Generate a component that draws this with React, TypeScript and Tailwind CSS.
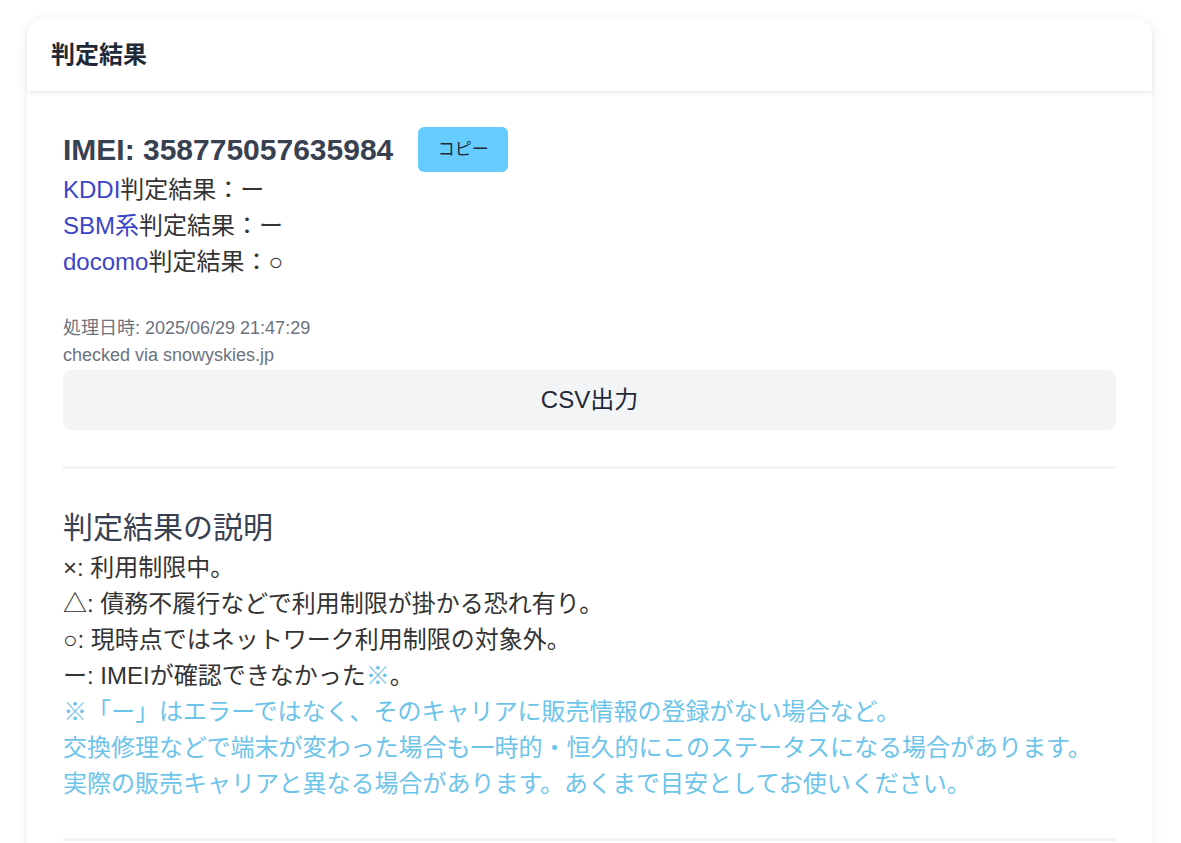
export default function App() {
  const font = { fontFamily: '"Liberation Sans", Arial, "Noto Sans CJK JP", sans-serif' };
  return (
    <div className="min-h-screen bg-white pt-[19px] pl-[27px] pr-[29px]" style={font}>
      <div className="rounded-2xl bg-white shadow-[0_2px_14px_rgba(0,0,0,0.07)]">
        <div className="h-[72px] flex items-center px-6 rounded-t-2xl shadow-[0_2px_4px_rgba(0,0,0,0.08)] relative">
          <h2 className="text-[24px] font-bold text-[#1f2937] leading-none">判定結果</h2>
        </div>
        <div className="px-9 pt-9 pb-0">
          <div className="flex items-center h-[45px]">
            <span className="text-[30px] font-bold text-[#374151]">IMEI: 358775057635984</span>
            <button className="ml-[25px] h-[45px] w-[90px] rounded-md bg-[#66ccff] text-[17px] text-[#1f2937]">コピー</button>
          </div>
          <div className="text-[24px] leading-[36px] text-[#333]">
            <div><span className="text-[#3b45c8]">KDDI</span>判定結果：ー</div>
            <div><span className="text-[#3b45c8]">SBM系</span>判定結果：ー</div>
            <div><span className="text-[#3b45c8]">docomo</span>判定結果：○</div>
          </div>
          <div className="mt-[35px] text-[18px] leading-[27px] text-[#6b7280]">
            <div>処理日時: 2025/06/29 21:47:29</div>
            <div>checked via snowyskies.jp</div>
          </div>
          <button className="mt-[1px] w-full h-[60px] rounded-lg bg-[#f3f4f6] text-[24px] text-[#1f2937]">CSV出力</button>
          <div className="mt-9 h-[3px] bg-[#f1f2f4]" />
          <div className="mt-9 text-[30px] leading-[45px] text-[#374151]">判定結果の説明</div>
          <div className="text-[24px] leading-[36px] text-[#333]">
            <div>×: 利用制限中。</div>
            <div>△: 債務不履行などで利用制限が掛かる恐れ有り。</div>
            <div>○: 現時点ではネットワーク利用制限の対象外。</div>
            <div>ー: IMEIが確認できなかった<span className="text-[#6dc4ea]">※</span>。</div>
            <div className="text-[#6dc4ea]">
              <div>※「ー」はエラーではなく、そのキャリアに販売情報の登録がない場合など。</div>
              <div>交換修理などで端末が変わった場合も一時的・恒久的にこのステータスになる場合があります。</div>
              <div>実際の販売キャリアと異なる場合があります。あくまで目安としてお使いください。</div>
            </div>
          </div>
          <div className="mt-9 h-[3px] bg-[#f1f2f4]" />
          <div className="h-[40px]" />
        </div>
      </div>
    </div>
  );
}
